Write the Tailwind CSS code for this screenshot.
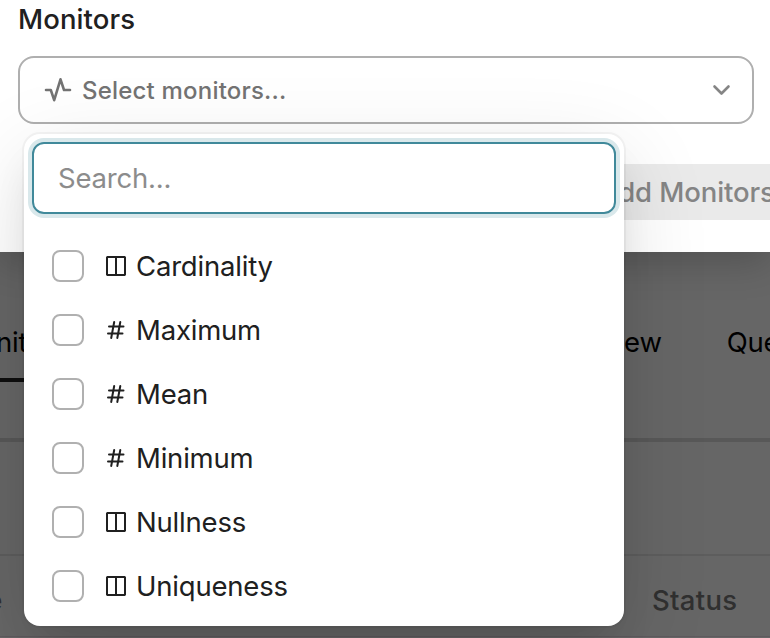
<!DOCTYPE html>
<html lang="en">
<head>
<meta charset="utf-8">
<title>Monitors</title>
<script src="https://cdn.jsdelivr.net/npm/@tailwindcss/browser@4"></script>
</head>
<body class="relative h-[638px] w-[770px] overflow-hidden bg-[#666] font-['Inter','Liberation_Sans',sans-serif] text-[27.5px] leading-8 tracking-[-0.2px] text-[#202020]">
<svg class="hidden">
  <symbol id="columns" viewBox="0 0 24 24"><path d="M3.5 3h17a1 1 0 0 1 .5.5v17a1 1 0 0 1-.5.5h-17a1 1 0 0 1-.5-.5v-17a1 1 0 0 1 .5-.5ZM12 3v18" fill="none" stroke="currentColor" stroke-width="2"/></symbol>
  <symbol id="hash" viewBox="0 0 24 24"><path d="M5 8.5h14.5M4 15.5h14.5M10.2 4 7.2 20M16.3 4l-3 16" fill="none" stroke="currentColor" stroke-width="2" stroke-linecap="round"/></symbol>
</svg>

<section class="relative h-[252px] overflow-x-clip bg-white px-[18px] pt-[3px] shadow-[0_10px_36px_rgba(0,0,0,0.2)]">
  <h2 class="font-medium leading-8 tracking-[0.1px]">Monitors</h2>
  <div class="mt-[21px] flex h-[68px] w-[736px] items-center rounded-[16px] border-2 border-[#afafaf] pr-[18px] pl-6 text-[#737373]">
    <svg class="h-7 w-7 shrink-0" viewBox="0 0 28 28" fill="none" stroke="currentColor" stroke-width="2.6" stroke-linecap="round" stroke-linejoin="round"><path d="M2 14h4.8l3.4 10.2L16.5 3.3 20 14h6"/></svg>
    <span class="mt-px ml-2.5 text-[24px] font-medium tracking-[0.2px]">Select monitors...</span>
    <svg class="ml-auto h-6 w-6" viewBox="0 0 24 24" fill="none" stroke="#858585" stroke-width="2.6" stroke-linecap="round" stroke-linejoin="round"><path d="m4.5 8.5 7 7 7-7"/></svg>
  </div>
  <button class="mt-10 ml-[550px] flex h-14 w-[240px] items-center bg-[#eaeaea] pb-px pl-[31px] font-medium tracking-[-0.1px] whitespace-nowrap text-[#858585]">Add Monitors</button>
</section>

<main>
  <nav class="flex h-[190px] justify-between border-b-4 border-[#585858] text-black">
    <div class="flex h-[130px] w-[60px] items-center border-b-4 border-[#0f0f0f] pt-[53px]"><span class="-ml-[45px]">Monitors</span></div>
    <div class="flex h-[130px] w-[210px] items-center pt-[49px] whitespace-nowrap"><span class="w-[102px] text-right">Preview</span><span class="ml-[65px]">Queries</span></div>
  </nav>
  <div class="h-[114px] border-b-2 border-[#5d5d5d]"></div>
  <div class="flex h-[81px] items-center justify-between border-b border-[#5f5a5e] pt-2 font-medium text-[#303030]">
    <span class="-ml-[74px]">Name</span><span class="w-[118px] tracking-[0.3px]">Status</span>
  </div>
</main>

<div class="absolute top-[134px] left-6 h-[492px] w-[600px] rounded-[16px] bg-white p-2 shadow-[0_0_0_2px_rgba(0,0,0,0.04),0_24px_90px_rgba(0,0,0,0.12),0_24px_40px_-12px_rgba(0,0,0,0.12)]">
  <div class="flex h-[72px] items-center rounded-[12px] border-2 border-[#40899a] px-6 pb-px text-[#8c8c8c] shadow-[0_0_0_4px_#d9e8eb]">Search...</div>
  <ul class="mt-5 px-5">
    <li class="flex h-16 items-center"><span class="size-8 rounded-[8px] border-2 border-[#b0b0b0]"></span><svg class="ml-5 size-6"><use href="#columns"/></svg><span class="mb-px ml-2">Cardinality</span></li>
    <li class="flex h-16 items-center"><span class="size-8 rounded-[8px] border-2 border-[#b0b0b0]"></span><svg class="ml-5 size-6"><use href="#hash"/></svg><span class="mb-px ml-2">Maximum</span></li>
    <li class="flex h-16 items-center"><span class="size-8 rounded-[8px] border-2 border-[#b0b0b0]"></span><svg class="ml-5 size-6"><use href="#hash"/></svg><span class="mb-px ml-2">Mean</span></li>
    <li class="flex h-16 items-center"><span class="size-8 rounded-[8px] border-2 border-[#b0b0b0]"></span><svg class="ml-5 size-6"><use href="#hash"/></svg><span class="mb-px ml-2">Minimum</span></li>
    <li class="flex h-16 items-center"><span class="size-8 rounded-[8px] border-2 border-[#b0b0b0]"></span><svg class="ml-5 size-6"><use href="#columns"/></svg><span class="mb-px ml-2">Nullness</span></li>
    <li class="flex h-16 items-center"><span class="size-8 rounded-[8px] border-2 border-[#b0b0b0]"></span><svg class="ml-5 size-6"><use href="#columns"/></svg><span class="mb-px ml-2">Uniqueness</span></li>
  </ul>
</div>
</body>
</html>
